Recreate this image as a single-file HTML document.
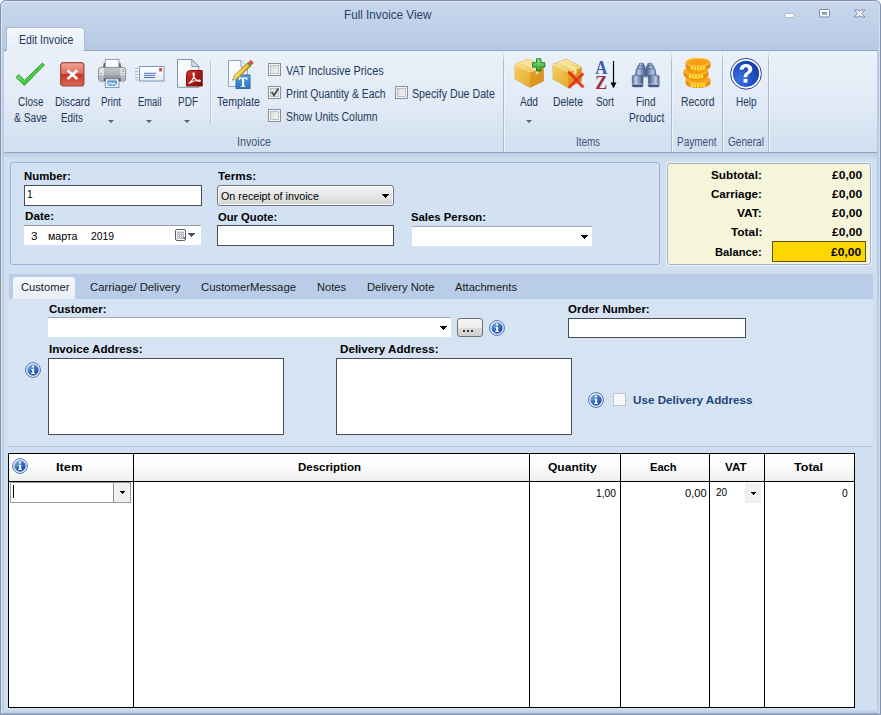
<!DOCTYPE html>
<html><head><meta charset="utf-8"><title>Full Invoice View</title>
<style>
*{box-sizing:border-box;margin:0;padding:0}
html,body{width:881px;height:715px;overflow:hidden;background:#fff;font-family:"Liberation Sans",sans-serif}
.a{position:absolute}
.t{position:absolute;white-space:pre;line-height:14px;height:14px;transform-origin:0 50%;font-family:"Liberation Sans",sans-serif}
#frame{left:0;top:0;width:881px;height:715px;border:1px solid #8292aa;border-radius:6px 6px 0 0;pointer-events:none;z-index:50;box-shadow:inset 1px 1px 0 #dde7f4,inset -1px 0 0 #d3dff0}
#bg{left:0;top:0;width:881px;height:715px;background:#bacce4;border-radius:6px 6px 0 0}
#title{left:0;top:0;width:881px;height:51px;background:linear-gradient(#c8d7ec 0,#c0d1e9 45%,#b5c8e3 100%);border-radius:6px 6px 0 0}
#content{left:4px;top:153px;width:873px;height:559px;background:#d0dff0}
#ribbon{left:4px;top:50px;width:873px;height:103px;background:linear-gradient(#eaf1f9 0,#e1eaf6 55%,#d9e4f2 75%,#d3dfef 100%);border-top:1px solid #8fa3c1;border-bottom:1px solid #94a6c1}
#rtab{left:6px;top:27px;width:79px;height:24px;background:linear-gradient(#f3f7fc,#e6eef8);border:1px solid #aabdd8;border-bottom:none;border-radius:4px 4px 0 0}
.gs{top:51px;width:2px;height:101px;background:linear-gradient(to bottom,rgba(176,190,210,0),#b0bed2 10%,#a9b9cf) left/1px 100% no-repeat,linear-gradient(to bottom,rgba(240,245,251,0),#eef3fa 10%) right/1px 100% no-repeat}
.cb{width:13px;height:13px;border:1px solid #8b9098;background:#f4f4f4}
.cb i{position:absolute;left:1px;top:1px;width:9px;height:9px;border:1px solid #bdbfc3;background:linear-gradient(135deg,#dadbdd,#f3f3f4)}
.arr{width:0;height:0;border-left:3px solid transparent;border-right:3px solid transparent;border-top:3px solid #5a6678}
.barr{width:0;height:0;border-left:3.5px solid transparent;border-right:3.5px solid transparent;border-top:4px solid #000}
.inp{background:#fff;border:1px solid #4a4e55}
.wh{background:#fff}
.panel{border:1px solid #9db4d6;border-radius:3px}
</style></head><body>
<div id="bg" class="a"></div>
<div id="title" class="a"></div>
<div id="content" class="a"></div>
<div id="ribbon" class="a"></div>
<div class="a" style="left:4px;top:153px;width:873px;height:6px;background:linear-gradient(#bccbe1,#d0dff0)"></div>
<div id="rtab" class="a"></div>

<!-- window controls -->
<svg class="a" style="left:780px;top:5px" width="95" height="18" viewBox="0 0 95 18">
 <rect x="5" y="8.500" width="9" height="4" rx=".8" fill="#fff" stroke="#a7b6cd" stroke-width=".9"/>
 <rect x="39.500" y="4.500" width="10" height="7.500" rx="1" fill="#fff" stroke="#7386a6" stroke-width="1"/>
 <rect x="42.500" y="7.500" width="4" height="1.600" fill="#c3d2e7" stroke="#7386a6" stroke-width="1"/>
 <path d="M74.300 5h3.900l1.400 1.600 1.400-1.600h3.900l-3.500 3.500 3.500 3.500h-3.900l-1.400-1.600-1.400 1.600h-3.900l3.500-3.500z" fill="#fff" stroke="#7386a6" stroke-width="1" stroke-linejoin="round"/>
</svg>

<!-- ribbon separators -->
<div class="a gs" style="left:503px"></div>
<div class="a gs" style="left:671px"></div>
<div class="a gs" style="left:722px"></div>
<div class="a gs" style="left:768px"></div>
<div class="a" style="left:210px;top:61px;width:1px;height:63px;background:#b9c9de"></div>
<div class="a" style="left:211px;top:61px;width:1px;height:63px;background:#eef3fa"></div>

<svg width="0" height="0" style="position:absolute"><defs>
 <linearGradient id="gGreen" x1="0" y1="0" x2="1" y2="1"><stop offset="0" stop-color="#9af09a"/><stop offset="0.5" stop-color="#4fd04f"/><stop offset="1" stop-color="#27a627"/></linearGradient>
 <linearGradient id="gRed" x1="0" y1="0" x2="0" y2="1"><stop offset="0" stop-color="#f0a597"/><stop offset="0.48" stop-color="#dd6d5c"/><stop offset="0.5" stop-color="#c23623"/><stop offset="1" stop-color="#de6a57"/></linearGradient>
 <linearGradient id="gPr" x1="0" y1="0" x2="0" y2="1"><stop offset="0" stop-color="#d9dcdf"/><stop offset="0.5" stop-color="#b3b8bd"/><stop offset="1" stop-color="#8d9399"/></linearGradient>
 <linearGradient id="gPr2" x1="0" y1="0" x2="0" y2="1"><stop offset="0" stop-color="#c3c6ca"/><stop offset=".55" stop-color="#abafb4"/><stop offset="1" stop-color="#9a9ea4"/></linearGradient>
 <linearGradient id="gEnv" x1="0" y1="0" x2="0" y2="1"><stop offset="0" stop-color="#ffffff"/><stop offset="1" stop-color="#e3ebf5"/></linearGradient>
 <linearGradient id="gPdf" x1="0" y1="0" x2="1" y2="1"><stop offset="0" stop-color="#d8322a"/><stop offset="1" stop-color="#7a0707"/></linearGradient>
 <linearGradient id="gPage" x1="0" y1="0" x2="1" y2="1"><stop offset="0" stop-color="#ffffff"/><stop offset="1" stop-color="#e8edf4"/></linearGradient>
 <linearGradient id="gPen" x1="0" y1="0" x2="1" y2="1"><stop offset="0" stop-color="#f9e27a"/><stop offset="0.5" stop-color="#e9b520"/><stop offset="1" stop-color="#b8860b"/></linearGradient>
 <linearGradient id="gTb" x1="0" y1="0" x2="0" y2="1"><stop offset="0" stop-color="#5aa3e6"/><stop offset="1" stop-color="#2e73bd"/></linearGradient>
 <linearGradient id="gBoxL" x1="0" y1="0" x2="1" y2="1"><stop offset="0" stop-color="#f4cf62"/><stop offset="1" stop-color="#e6ab2c"/></linearGradient>
 <linearGradient id="gBoxR" x1="0" y1="0" x2="1" y2="1"><stop offset="0" stop-color="#eaa62a"/><stop offset="1" stop-color="#cf8a12"/></linearGradient>
 <linearGradient id="gBoxT" x1="0" y1="0" x2="0" y2="1"><stop offset="0" stop-color="#fbeaa6"/><stop offset="1" stop-color="#eec85a"/></linearGradient>
 <linearGradient id="gPlus" x1="0" y1="0" x2="0" y2="1"><stop offset="0" stop-color="#8fe58a"/><stop offset="1" stop-color="#2da32b"/></linearGradient>
 <linearGradient id="gBin" x1="0" y1="0" x2="1" y2="0"><stop offset="0" stop-color="#5d75a6"/><stop offset="0.35" stop-color="#b9c8e2"/><stop offset="1" stop-color="#4f689b"/></linearGradient>
 <linearGradient id="gCoin" x1="0" y1="0" x2="0" y2="1"><stop offset="0" stop-color="#ffc21e"/><stop offset="1" stop-color="#f08c00"/></linearGradient>
 <radialGradient id="gHelp" cx="0.25" cy="0.7" r="0.9"><stop offset="0" stop-color="#3a72e2"/><stop offset="0.55" stop-color="#1f50c2"/><stop offset="1" stop-color="#16389f"/></radialGradient>
 <g id="box">
  <path d="M1 7.500 L14 2 L29.500 10 L29.500 24 L16 30.500 L1 22z" fill="#c79a3a" stroke="#c9a85a" stroke-width=".8" stroke-linejoin="round"/>
  <path d="M1 7.500 L16 15 L16 30.500 L1 22z" fill="url(#gBoxL)"/>
  <path d="M16 15 L29.500 10 L29.500 24 L16 30.500z" fill="url(#gBoxR)"/>
  <path d="M1 7.500 L14 2 L29.500 10 L16 15z" fill="url(#gBoxT)"/>
  <path d="M6.500 5.200 L9.500 3.900 L24.600 11.800 L24.600 16.500 L21.800 17.600 L21.800 12.900z" fill="#f6e6b4" opacity=".9"/>
  <path d="M1 7.500 L16 15 L29.500 10" fill="none" stroke="#fbefc0" stroke-width=".8" opacity=".9"/>
 </g>
</defs></svg>

<!-- close & save check -->
<svg class="a" style="left:14px;top:60px" width="34" height="28" viewBox="0 0 34 28">
 <path d="M2 17.4 L4.8 14.6 L10.4 20.4 L28.4 3 L30.4 5 L10.4 25.4 Z" fill="url(#gGreen)" stroke="#2f9e2f" stroke-width="1" stroke-linejoin="round"/>
 
</svg>
<!-- discard -->
<svg class="a" style="left:60px;top:62px" width="25" height="25" viewBox="0 0 25 25">
 <rect x="0.6" y="0.6" width="23.3" height="23.3" rx="3" fill="url(#gRed)" stroke="#a34a3d" stroke-width="1.2"/>
 <path d="M8.600 9.200 L16.200 16 M16.200 9.200 L8.600 16" stroke="#fff" stroke-width="2.700" stroke-linecap="square"/>
</svg>
<!-- printer -->
<svg class="a" style="left:97px;top:58px" width="30" height="31" viewBox="0 0 30 31">
 <path d="M6.800 5h1.800v4.500h-2.600zM21.600 5h1.800l.8 4.500h-2.600z" fill="#5d6269"/>
 <rect x="8.300" y="1.400" width="13.600" height="8.200" fill="#fdfdfd" stroke="#8d9299" stroke-width=".9"/>
 <rect x="1.600" y="9.400" width="27" height="13.800" rx="2.200" fill="#e6e8ea" stroke="#7d8289" stroke-width=".9"/>
 <rect x="6.800" y="9.900" width="16.700" height="12.800" fill="url(#gPr2)"/>
 <path d="M2 17.200h26.200v3.800a1.800 1.800 0 0 1-1.800 1.800h-22.600a1.800 1.800 0 0 1-1.800-1.800z" fill="#8e9298" opacity=".55"/>
 <rect x="6.800" y="20.600" width="16.700" height="2.300" fill="#33373d"/>
 <rect x="8.300" y="20.900" width="13.600" height="8.700" fill="#f4f8fd" stroke="#6f8db4" stroke-width=".9"/>
 <rect x="10.300" y="22.400" width="9.600" height="5.400" fill="#5b92d4"/>
 <path d="M10.600 27.400l2.600-3 2 2.100 1.600-1.700 2.800 2.700" stroke="#e3f1ff" stroke-width="1.100" fill="none"/>
 <path d="M25.400 11.500h1.400M25.400 13.500h1.400M25.400 15.500h1.400M3.600 15.500h1.400" stroke="#5d6269" stroke-width=".9"/>
</svg>
<!-- email -->
<svg class="a" style="left:134px;top:65px" width="31" height="18" viewBox="0 0 31 18">
 <rect x="5.500" y="1.500" width="24.500" height="14.500" fill="url(#gEnv)" stroke="#7c97bc" stroke-width="1"/>
 <path d="M1 3.5h3M1 6.5h3M1 9.5h3M1 12.5h3M1 15h3" stroke="#a9b9cf" stroke-width="1"/>
 <rect x="25.200" y="3" width="2.800" height="3.400" fill="#d4483d"/>
 <path d="M10 8.300h12M10 10.400h11M10 12.500h11" stroke="#4c73ad" stroke-width="1"/>
</svg>
<!-- pdf -->
<svg class="a" style="left:176px;top:58px" width="28" height="31" viewBox="0 0 28 31">
 <path d="M1.500 1.500h14.300l7 7v20.800h-21.300z" fill="url(#gPage)" stroke="#8397b3" stroke-width="1"/>
 <path d="M15.800 1.500v7h7z" fill="#dbe3ee" stroke="#8397b3" stroke-width="1" stroke-linejoin="round"/>
 <path d="M14.500 12.500h11.700v15.500h-15.700v-11.500a4 4 0 0 1 4-4z" fill="url(#gPdf)" stroke="#860b0b" stroke-width="1"/>
 <path d="M12.600 25.600c2.800-1.800 5.300-5.600 5.800-9.700.2-1.500-1.700-1.500-1.500 0 .6 3.800 2.900 6.600 6.300 7.500 1.500.4 1.500-1.400 0-1.400-3.400 0-7.200 1.300-10.600 3.600z" fill="none" stroke="#fff" stroke-width="1.100" opacity=".95"/>
</svg>
<!-- template -->
<svg class="a" style="left:226px;top:58px" width="30" height="32" viewBox="0 0 30 32">
 <path d="M2.500 2.500h12.500l6.500 6.500v19.500h-19z" fill="url(#gPage)" stroke="#8ea4c4" stroke-width="1"/>
 <path d="M15 2.500v6.500h6.500" fill="#e7edf5" stroke="#8ea4c4" stroke-width="1"/>
 <rect x="10" y="17" width="14" height="13.500" fill="url(#gTb)" stroke="#2c69ad" stroke-width="1"/>
 <path d="M12.800 19.500h8.600v2.600h-.9l-.4-1.300h-2v6.800l1.300.3v.8h-4.600v-.8l1.300-.3v-6.800h-2l-.4 1.300h-.9z" fill="#fff"/>
 <g transform="translate(6.300 22.400) rotate(-43.500)">
  <path d="M0 0 L4 -2.300 L4 2.300z" fill="#e9c9a0"/><path d="M0 0 L1.600 -.9 L1.600 .9z" fill="#5a4630"/>
  <rect x="4" y="-2.300" width="19" height="4.600" fill="url(#gPen)" stroke="#9a7a1a" stroke-width=".6"/>
  <rect x="4" y="-.6" width="19" height="1.200" fill="#fff3a8" opacity=".7"/>
  <rect x="22.500" y="-2.300" width="1.800" height="4.600" fill="#3f8f4a"/>
  <rect x="24.300" y="-2.300" width="3.400" height="4.600" rx="1.200" fill="#d9553f"/>
 </g>
</svg>
<!-- add -->
<svg class="a" style="left:514px;top:57px" width="32" height="32" viewBox="0 0 32 32">
 <use href="#box"/>
 <path d="M22.500 1.800h4.400v3.900h3.900v4.400h-3.900v3.900h-4.400v-3.900h-3.900v-4.400h3.900z" fill="url(#gPlus)" stroke="#1f7f1f" stroke-width="1" stroke-linejoin="round"/>
</svg>
<!-- delete -->
<svg class="a" style="left:552px;top:57px" width="33" height="33" viewBox="0 0 33 33">
 <use href="#box"/>
 <path d="M17 15.500 C21 19 26 25 30.600 29.500 M30.400 17.300 C26 21 21 26.500 17.600 30" stroke="#f06a2a" stroke-width="3.600" stroke-linecap="round" fill="none" opacity=".55"/>
 <path d="M17 15.500 C21 19 26 25 30.600 29.500 M30.400 17.300 C26 21 21 26.500 17.600 30" stroke="#e6301f" stroke-width="2.400" stroke-linecap="round" fill="none"/>
</svg>
<!-- sort -->
<svg class="a" style="left:593px;top:59px" width="26" height="31" viewBox="0 0 26 31">
 <text transform="translate(8.300 14.800) scale(.88 1)" font-family="Liberation Serif" font-weight="bold" font-size="19" text-anchor="middle" fill="#3b5fae">A</text>
 <text transform="translate(8.300 29.800) scale(.95 1)" font-family="Liberation Serif" font-weight="bold" font-size="19" text-anchor="middle" fill="#9f2f3d">Z</text>
 <path d="M20.500 2v24" stroke="#000" stroke-width="1.200"/><path d="M17.500 23.500h6l-3 6z" fill="#000"/>
</svg>
<!-- binoculars -->
<svg class="a" style="left:631px;top:61px" width="30" height="27" viewBox="0 0 30 27">
 <defs><linearGradient id="gB2" x1="0" y1="0" x2="1" y2="0"><stop offset="0" stop-color="#4f6690"/><stop offset=".3" stop-color="#bccae2"/><stop offset=".55" stop-color="#8ea3c6"/><stop offset="1" stop-color="#3f5683"/></linearGradient></defs>
 <rect x="12" y="13.800" width="5.800" height="2.800" fill="#8c9fc0"/>
 <g id="brl" stroke="#465c88" stroke-width=".6"><rect x="8" y="2.300" width="4.800" height="3" rx="1" fill="url(#gB2)"/>
 <rect x="6.400" y="4.800" width="7.700" height="3.400" rx="1.200" fill="url(#gB2)"/>
 <path d="M5.200 8h9.500v6.700h-10.400z" fill="url(#gB2)"/>
 <rect x="1.300" y="14.300" width="10.700" height="11.400" rx="1.300" fill="url(#gB2)"/>
 <rect x="1.300" y="22.600" width="10.700" height="1" fill="#d3dcec" opacity=".8" stroke="none"/>
 <rect x="1.600" y="24" width="10.100" height="1.700" rx=".8" fill="#3c5280"/></g>
 <use href="#brl" transform="translate(29.400 0) scale(-1 1)"/>
</svg>
<!-- coins -->
<svg class="a" style="left:683px;top:57px" width="29" height="32" viewBox="0 0 29 32">
 <defs><linearGradient id="gCs" x1="0" y1="0" x2="1" y2="0"><stop offset="0" stop-color="#ee8a08"/><stop offset=".5" stop-color="#fbb021"/><stop offset="1" stop-color="#ec8504"/></linearGradient>
 <g id="coin"><path d="M-12 0v4.200a12 4 0 0 0 24 0v-4.200z" fill="url(#gCs)" stroke="#de7c00" stroke-width=".7"/>
 <path d="M-7.200 3.200Q0 5 7.200 3.200v4.100Q0 9.300 -7.200 7.300z" fill="#ffe03a"/>
 <path d="M-4.400 3.900v4.400M-1.500 4.200v4.500M1.500 4.200v4.500M4.400 3.900v4.400" stroke="#f39a0c" stroke-width=".9"/>
 <ellipse cx="0" cy="0" rx="12" ry="4" fill="#f8a51b" stroke="#ffc545" stroke-width="1"/>
 <ellipse cx="0" cy=".3" rx="8.500" ry="2.400" fill="#f59c12"/></g></defs>
 <use href="#coin" transform="translate(15 22.300)"/>
 <use href="#coin" transform="translate(13 13.800)"/>
 <use href="#coin" transform="translate(15 5.200)"/>
</svg>
<!-- help -->
<svg class="a" style="left:730px;top:57px" width="33" height="34" viewBox="0 0 33 34">
 <circle cx="16" cy="16.800" r="15.400" fill="#fdfeff" stroke="#2f4397" stroke-width="1"/>
 <circle cx="16" cy="16.800" r="13.100" fill="url(#gHelp)"/>
 <g transform="translate(16 16.300) scale(1.120 1.060) translate(-16.600 -16.500)"><path d="M11 13.200c0-3.400 2.400-5.400 5.600-5.400 3.300 0 5.600 2 5.600 4.800 0 2.300-1.300 3.400-2.700 4.400-1.200.9-1.700 1.500-1.700 3.200h-3.300c0-2.500.8-3.600 2.300-4.700 1.100-.8 1.800-1.400 1.800-2.600 0-1.200-.8-2-2.100-2-1.400 0-2.200.9-2.300 2.300z" fill="#fff"/>
 <rect x="14.400" y="21.800" width="3.500" height="3.500" fill="#fff"/></g>
</svg>


<!-- checkboxes -->
<div class="a cb" style="left:268px;top:63px"><i></i></div>
<div class="a cb" style="left:268px;top:86px"><i></i>
 <svg class="a" style="left:1px;top:0" width="10" height="11" viewBox="0 0 10 11"><path d="M1.600 5l2.500 3.300L8.300 1.500" fill="none" stroke="#4b5158" stroke-width="2"/></svg></div>
<div class="a cb" style="left:268px;top:109px"><i></i></div>
<div class="a cb" style="left:395px;top:86px"><i></i></div>

<!-- ribbon dropdown arrows -->
<div class="a arr" style="left:108px;top:120px"></div>
<div class="a arr" style="left:146px;top:120px"></div>
<div class="a arr" style="left:184px;top:120px"></div>
<div class="a arr" style="left:526px;top:120px"></div>

<!-- top panels -->
<div class="a panel" style="left:10px;top:162px;width:650px;height:103px;background:#d3e2f3"></div>
<div class="a panel" style="left:667px;top:163px;width:204px;height:102px;background:#f5f5dc;border-color:#a5b3c3;box-shadow:0 0 0 1px rgba(240,245,252,.75)"></div>
<div class="a" style="left:772px;top:241px;width:94px;height:21px;background:#ffd700;border:1px solid #5e5212"></div>

<div class="a inp" style="left:24px;top:185px;width:178px;height:21px"></div>
<div class="a wh" style="left:24px;top:225px;width:177px;height:20px;border-top:1px solid #9c9ea3"></div>
<div class="a" style="left:217px;top:185px;width:177px;height:21px;border:1px solid #6b7685;border-radius:3px;box-shadow:inset 0 0 0 1px #fafafa;background:linear-gradient(#f3f3f3,#e6e6e6 55%,#d2d2d2)"></div>
<svg class="a" style="left:382px;top:194px" width="7" height="4" shape-rendering="crispEdges"><path d="M0 0h7v1h-7zM1 1h5v1h-5zM2 2h3v1h-3zM3 3h1v1h-1z" fill="#000"/></svg>
<div class="a inp" style="left:217px;top:225px;width:177px;height:21px"></div>
<div class="a wh" style="left:412px;top:226px;width:180px;height:20px;border-top:1px solid #a3abb8"></div>
<svg class="a" style="left:581px;top:235px" width="7" height="4" shape-rendering="crispEdges"><path d="M0 0h7v1h-7zM1 1h5v1h-5zM2 2h3v1h-3zM3 3h1v1h-1z" fill="#000"/></svg>
<!-- calendar glyph -->
<svg class="a" style="left:175px;top:229px" width="22" height="13" viewBox="0 0 22 13">
 <rect x="0.500" y="0.500" width="10" height="11" rx="1.600" fill="#fff" stroke="#5a5a5e"/>
 <rect x="2" y="2.500" width="7" height="7.500" fill="#b3b7c4"/>
 <path d="M3 4h1v1h-1zM5 4h1v1h-1zM7 4h1v1h-1zM3 6h1v1h-1zM5 6h1v1h-1zM7 6h1v1h-1zM3 8h1v1h-1zM5 8h1v1h-1z" fill="#fff"/>
 <path d="M8 9.500h2.500v-2z" fill="#3c3c40"/>
 <path d="M13 4h7v1h-7zM14 5h5v1h-5zM15 6h3v1h-3zM16 7h1v1h-1z" fill="#4a5060" shape-rendering="crispEdges"/>
</svg>

<!-- tab strip -->
<div class="a" style="left:9px;top:274px;width:864px;height:25px;background:#b9cde8"></div>
<div class="a" style="left:13px;top:277px;width:62px;height:22px;background:linear-gradient(#f4f8fc,#e9f0f9);border-radius:3px 3px 0 0"></div>
<div class="a" style="left:8px;top:299px;width:865px;height:147px;background:#d5e3f3"></div>
<div class="a" style="left:8px;top:446px;width:865px;height:1px;background:#b7cae3"></div>

<div class="a wh" style="left:48px;top:317px;width:403px;height:20px;border-top:1px solid #a3abb8"></div>
<svg class="a" style="left:440px;top:326px" width="7" height="4" shape-rendering="crispEdges"><path d="M0 0h7v1h-7zM1 1h5v1h-5zM2 2h3v1h-3zM3 3h1v1h-1z" fill="#000"/></svg>
<div class="a" style="left:457px;top:318px;width:26px;height:19px;border:1px solid #707070;border-radius:3px;background:linear-gradient(#f5f5f5,#ececec 50%,#dcdcdc 51%,#cfcfcf)"></div>
<div class="a" style="left:463px;top:330px;width:2px;height:2px;background:#333;box-shadow:4px 0 0 #333,8px 0 0 #333"></div>
<div class="a inp" style="left:568px;top:318px;width:178px;height:20px"></div>
<div class="a inp" style="left:48px;top:358px;width:236px;height:77px"></div>
<div class="a inp" style="left:336px;top:358px;width:236px;height:77px"></div>
<div class="a" style="left:613px;top:393px;width:13px;height:13px;border:1px solid #c1c5cb;background:#f6f6f6"></div>

<!-- info icons -->
<svg width="0" height="0" style="position:absolute"><defs>
 <linearGradient id="ig" x1="0.15" y1="0" x2="0.85" y2="1"><stop offset="0" stop-color="#8db6e6"/><stop offset="0.45" stop-color="#3f77c6"/><stop offset="1" stop-color="#143f9a"/></linearGradient>
 <g id="info"><circle cx="8" cy="8" r="7.4" fill="#eef4fc" stroke="#3f63a3" stroke-width="0.9"/><circle cx="8" cy="8" r="5.7" fill="url(#ig)"/>
 <circle cx="8" cy="4.6" r="1.15" fill="#fff"/><path d="M6.300 6.700h2.800v4.200h1v1.100H6.200v-1.100h1V7.800h-.900z" fill="#fff"/></g>
</defs></svg>
<svg class="a" style="left:489px;top:320px" width="16" height="16"><use href="#info"/></svg>
<svg class="a" style="left:25px;top:362px" width="16" height="16"><use href="#info"/></svg>
<svg class="a" style="left:588px;top:392px" width="16" height="16"><use href="#info"/></svg>

<!-- grid -->
<div class="a" style="left:8px;top:453px;width:847px;height:255px;background:#fff;border:1px solid #000"></div>
<div class="a" style="left:9px;top:454px;width:845px;height:27px;background:linear-gradient(#ffffff 0,#fbfbfb 50%,#eeeeee 100%)"></div>
<div class="a" style="left:8px;top:481px;width:847px;height:1px;background:#000"></div>
<div class="a" style="left:133px;top:453px;width:1px;height:255px;background:#000"></div>
<div class="a" style="left:529px;top:453px;width:1px;height:255px;background:#000"></div>
<div class="a" style="left:620px;top:453px;width:1px;height:255px;background:#000"></div>
<div class="a" style="left:709px;top:453px;width:1px;height:255px;background:#000"></div>
<div class="a" style="left:764px;top:453px;width:1px;height:255px;background:#000"></div>
<svg class="a" style="left:12px;top:458px" width="16" height="16"><use href="#info"/></svg>
<div class="a" style="left:10px;top:482px;width:121px;height:21px;border:1px solid #9a9a9a;background:#fff"></div>
<div class="a" style="left:113px;top:483px;width:17px;height:19px;background:#f0f0f0;border-left:1px solid #8f8f8f"></div>
<div class="a" style="left:13px;top:485px;width:1px;height:13px;background:#000"></div>
<svg class="a" style="left:120px;top:491px" width="5" height="3" shape-rendering="crispEdges"><path d="M0 0h5v1h-5zM1 1h3v1h-3zM2 2h1v1h-1z" fill="#000"/></svg>
<div class="a" style="left:745px;top:483px;width:16px;height:20px;background:#f0f0f0"></div>
<svg class="a" style="left:751px;top:492px" width="5" height="3" shape-rendering="crispEdges"><path d="M0 0h5v1h-5zM1 1h3v1h-3zM2 2h1v1h-1z" fill="#000"/></svg>

<span class="t" style="left:343.5px;top:8.3px;font-size:12px;color:#2a4266;transform:scaleX(0.974);">Full Invoice View</span>
<span class="t" style="left:18.7px;top:32.8px;font-size:12px;color:#1e395b;transform:scaleX(0.878);">Edit Invoice</span>
<span class="t" style="left:17.7px;top:94.8px;font-size:12px;color:#1e395b;transform:scaleX(0.828);">Close</span>
<span class="t" style="left:14.2px;top:110.8px;font-size:12px;color:#1e395b;transform:scaleX(0.853);">&amp; Save</span>
<span class="t" style="left:54.5px;top:94.8px;font-size:12px;color:#1e395b;transform:scaleX(0.860);">Discard</span>
<span class="t" style="left:60.7px;top:110.8px;font-size:12px;color:#1e395b;transform:scaleX(0.817);">Edits</span>
<span class="t" style="left:101.0px;top:94.8px;font-size:12px;color:#1e395b;transform:scaleX(0.810);">Print</span>
<span class="t" style="left:137.5px;top:94.8px;font-size:12px;color:#1e395b;transform:scaleX(0.783);">Email</span>
<span class="t" style="left:177.5px;top:94.8px;font-size:12px;color:#1e395b;transform:scaleX(0.833);">PDF</span>
<span class="t" style="left:217.0px;top:94.8px;font-size:12px;color:#1e395b;transform:scaleX(0.883);">Template</span>
<span class="t" style="left:286.0px;top:63.8px;font-size:12px;color:#1e395b;transform:scaleX(0.904);">VAT Inclusive Prices</span>
<span class="t" style="left:286.0px;top:86.8px;font-size:12px;color:#1e395b;transform:scaleX(0.867);">Print Quantity &amp; Each</span>
<span class="t" style="left:286.0px;top:109.8px;font-size:12px;color:#1e395b;transform:scaleX(0.868);">Show Units Column</span>
<span class="t" style="left:412.0px;top:86.8px;font-size:12px;color:#1e395b;transform:scaleX(0.889);">Specify Due Date</span>
<span class="t" style="left:237.0px;top:134.8px;font-size:12px;color:#3c5378;transform:scaleX(0.894);">Invoice</span>
<span class="t" style="left:520.0px;top:94.8px;font-size:12px;color:#1e395b;transform:scaleX(0.843);">Add</span>
<span class="t" style="left:552.5px;top:94.8px;font-size:12px;color:#1e395b;transform:scaleX(0.865);">Delete</span>
<span class="t" style="left:596.0px;top:94.8px;font-size:12px;color:#1e395b;transform:scaleX(0.818);">Sort</span>
<span class="t" style="left:636.0px;top:94.8px;font-size:12px;color:#1e395b;transform:scaleX(0.835);">Find</span>
<span class="t" style="left:628.7px;top:110.8px;font-size:12px;color:#1e395b;transform:scaleX(0.853);">Product</span>
<span class="t" style="left:576.0px;top:134.8px;font-size:12px;color:#3c5378;transform:scaleX(0.818);">Items</span>
<span class="t" style="left:680.5px;top:94.8px;font-size:12px;color:#1e395b;transform:scaleX(0.866);">Record</span>
<span class="t" style="left:735.5px;top:94.8px;font-size:12px;color:#1e395b;transform:scaleX(0.830);">Help</span>
<span class="t" style="left:677.0px;top:134.8px;font-size:12px;color:#3c5378;transform:scaleX(0.834);">Payment</span>
<span class="t" style="left:728.0px;top:134.8px;font-size:12px;color:#3c5378;transform:scaleX(0.843);">General</span>
<span class="t" style="left:20.6px;top:280.2px;font-size:11px;color:#1a1a1a;transform:scaleX(1.015);">Customer</span>
<span class="t" style="left:89.5px;top:280.2px;font-size:11px;color:#1a1a1a;transform:scaleX(1.028);">Carriage/ Delivery</span>
<span class="t" style="left:201.0px;top:280.2px;font-size:11px;color:#1a1a1a;transform:scaleX(1.029);">CustomerMessage</span>
<span class="t" style="left:317.0px;top:280.2px;font-size:11px;color:#1a1a1a;transform:scaleX(1.009);">Notes</span>
<span class="t" style="left:367.0px;top:280.2px;font-size:11px;color:#1a1a1a;transform:scaleX(1.022);">Delivery Note</span>
<span class="t" style="left:455.0px;top:280.2px;font-size:11px;color:#1a1a1a;transform:scaleX(1.014);">Attachments</span>
<span class="t" style="left:24.3px;top:169.2px;font-size:11px;color:#000;font-weight:bold;transform:scaleX(1.032);">Number:</span>
<span class="t" style="left:24.5px;top:209.2px;font-size:11px;color:#000;font-weight:bold;transform:scaleX(1.061);">Date:</span>
<span class="t" style="left:217.5px;top:169.2px;font-size:11px;color:#000;font-weight:bold;transform:scaleX(1.065);">Terms:</span>
<span class="t" style="left:217.5px;top:210.2px;font-size:11px;color:#000;font-weight:bold;transform:scaleX(1.020);">Our Quote:</span>
<span class="t" style="left:411.0px;top:210.2px;font-size:11px;color:#000;font-weight:bold;transform:scaleX(1.031);">Sales Person:</span>
<span class="t" style="left:48.5px;top:302.2px;font-size:11px;color:#000;font-weight:bold;transform:scaleX(1.045);">Customer:</span>
<span class="t" style="left:48.5px;top:342.2px;font-size:11px;color:#000;font-weight:bold;transform:scaleX(1.060);">Invoice Address:</span>
<span class="t" style="left:339.5px;top:342.2px;font-size:11px;color:#000;font-weight:bold;transform:scaleX(1.058);">Delivery Address:</span>
<span class="t" style="left:568.3px;top:302.2px;font-size:11px;color:#000;font-weight:bold;transform:scaleX(1.044);">Order Number:</span>
<span class="t" style="left:632.5px;top:393.2px;font-size:11px;color:#1d477a;font-weight:bold;transform:scaleX(1.060);">Use Delivery Address</span>
<span class="t" style="left:55.5px;top:460.2px;font-size:11px;color:#000;font-weight:bold;transform:scaleX(1.171);">Item</span>
<span class="t" style="left:298.0px;top:460.2px;font-size:11px;color:#000;font-weight:bold;transform:scaleX(1.041);">Description</span>
<span class="t" style="left:548.2px;top:460.2px;font-size:11px;color:#000;font-weight:bold;transform:scaleX(1.094);">Quantity</span>
<span class="t" style="left:649.5px;top:460.2px;font-size:11px;color:#000;font-weight:bold;transform:scaleX(1.008);">Each</span>
<span class="t" style="left:724.5px;top:460.2px;font-size:11px;color:#000;font-weight:bold;transform:scaleX(1.055);">VAT</span>
<span class="t" style="left:793.6px;top:460.2px;font-size:11px;color:#000;font-weight:bold;transform:scaleX(1.139);">Total</span>
<span class="t" style="left:596.0px;top:486.2px;font-size:11px;color:#000;transform:scaleX(0.934);">1,00</span>
<span class="t" style="left:685.0px;top:486.2px;font-size:11px;color:#000;transform:scaleX(1.013);">0,00</span>
<span class="t" style="left:716.2px;top:485.2px;font-size:11px;color:#000;transform:scaleX(0.914);">20</span>
<span class="t" style="left:842.0px;top:486.2px;font-size:11px;color:#000;transform:scaleX(0.931);">0</span>
<span class="t" style="left:26.6px;top:187.2px;font-size:11px;color:#000;transform:scaleX(0.931);">1</span>
<span class="t" style="left:221.0px;top:189.2px;font-size:11px;color:#000;transform:scaleX(0.977);">On receipt of invoice</span>
<span class="t" style="left:31.3px;top:229.2px;font-size:11px;color:#000;transform:scaleX(1.061);">3</span>
<span class="t" style="left:48.4px;top:229.2px;font-size:11px;color:#000;transform:scaleX(0.964);">марта</span>
<span class="t" style="left:91.2px;top:229.2px;font-size:11px;color:#000;transform:scaleX(0.943);">2019</span>
<span class="t" style="left:711.2px;top:168.2px;font-size:11px;color:#000;font-weight:bold;transform:scaleX(1.066);">Subtotal:</span>
<span class="t" style="left:711.2px;top:187.2px;font-size:11px;color:#000;font-weight:bold;transform:scaleX(1.052);">Carriage:</span>
<span class="t" style="left:737.2px;top:206.2px;font-size:11px;color:#000;font-weight:bold;transform:scaleX(1.087);">VAT:</span>
<span class="t" style="left:730.6px;top:225.2px;font-size:11px;color:#000;font-weight:bold;transform:scaleX(1.078);">Total:</span>
<span class="t" style="left:715.3px;top:245.2px;font-size:11px;color:#000;font-weight:bold;transform:scaleX(1.018);">Balance:</span>
<span class="t" style="left:831.8px;top:168.2px;font-size:11px;color:#000;font-weight:bold;transform:scaleX(1.097);">£0,00</span>
<span class="t" style="left:831.8px;top:187.2px;font-size:11px;color:#000;font-weight:bold;transform:scaleX(1.097);">£0,00</span>
<span class="t" style="left:831.8px;top:206.2px;font-size:11px;color:#000;font-weight:bold;transform:scaleX(1.097);">£0,00</span>
<span class="t" style="left:831.8px;top:225.2px;font-size:11px;color:#000;font-weight:bold;transform:scaleX(1.097);">£0,00</span>
<span class="t" style="left:830.8px;top:245.2px;font-size:11px;color:#000;font-weight:bold;transform:scaleX(1.097);">£0,00</span>
<div class="a" style="left:1px;top:710px;width:879px;height:5px;background:linear-gradient(#cddbee,#b9cbe3 50%,#9aa8bd 80%,#8f9db3)"></div>
<div id="frame" class="a"></div>
</body></html>
